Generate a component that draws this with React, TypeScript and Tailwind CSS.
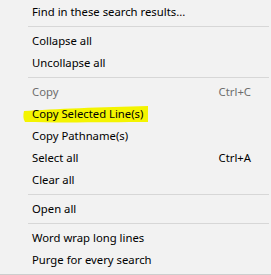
type Item = { label: string; shortcut?: string; disabled?: boolean; marked?: boolean } | 'sep';

const items: Item[] = [
  { label: 'Find in these search results...' },
  'sep',
  { label: 'Collapse all' },
  { label: 'Uncollapse all' },
  'sep',
  { label: 'Copy', shortcut: 'Ctrl+C', disabled: true },
  { label: 'Copy Selected Line(s)', marked: true },
  { label: 'Copy Pathname(s)' },
  { label: 'Select all', shortcut: 'Ctrl+A' },
  { label: 'Clear all' },
  'sep',
  { label: 'Open all' },
  'sep',
  { label: 'Word wrap long lines' },
  { label: 'Purge for every search' },
];

// hand-drawn highlighter stroke behind the marked row
const Marker = () => (
  <svg className="absolute left-[23px] top-[1px]" width={126} height={20} viewBox="0 0 126 20">
    <path d="M1 7 C30 5 80 3 125 2 L125 18 C90 18 40 19 2 18 C0 15 0 11 1 7 Z" fill="#f4f400" />
  </svg>
);

const App = () => {
  return (
    <div
      className="w-[271px] h-[275px] bg-[#f2f2f2] border-b border-[#cdcdcd] pt-[1px] text-[11.3px] text-black overflow-hidden"
      style={{ fontFamily: '"Segoe UI", "Noto Sans", sans-serif' }}
    >
      {items.map((item, i) =>
        item === 'sep' ? (
          <div key={i} className="h-[7px] flex items-center pl-[28px] pr-[2px]">
            <div className="h-px w-full bg-[#d7d7d7]" />
          </div>
        ) : (
          <div
            key={i}
            className={`relative h-[22px] flex items-center pl-[32px] pr-[20px] ${item.disabled ? 'text-[#6d6d6d]' : ''}`}
          >
            {item.marked && <Marker />}
            <span className="relative flex-1 leading-none">{item.label}</span>
            {item.shortcut && <span className="relative leading-none">{item.shortcut}</span>}
          </div>
        )
      )}
    </div>
  );
};

export default App;
